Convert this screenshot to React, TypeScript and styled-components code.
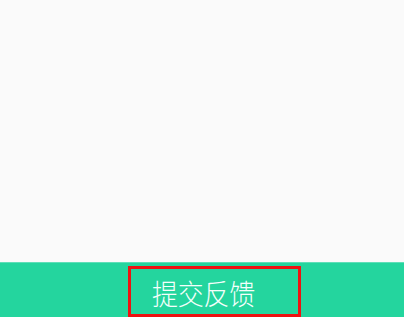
import React from "react";
import styled, { createGlobalStyle } from "styled-components";

const Global = createGlobalStyle`
  html, body { margin: 0; padding: 0; background: #fafafa; }
  body { font-family: "Noto Sans CJK SC", "Noto Sans", sans-serif; }
`;

const Page = styled.div`
  display: flex;
  flex-direction: column;
  width: 404px;
  height: 317px;
  overflow: hidden;
`;

const Content = styled.main`
  flex: 1;
  background: #fafafa;
`;

const BottomBar = styled.footer`
  position: relative;
  height: 55px;
  flex-shrink: 0;
  background: #24d59e;
  border-top: 1px solid #5fdfb8;
  display: flex;
  align-items: center;
  justify-content: center;
  padding-top: 5px;
  padding-left: 3px;
  box-sizing: border-box;
`;

const SubmitLabel = styled.span`
  display: inline-block;
  color: #f4fffb;
  font-size: 26px;
  font-weight: 300;
  line-height: 1;
  letter-spacing: -0.3px;
  transform: scaleY(1.1);
`;

const Highlight = styled.div`
  position: absolute;
  left: 128px;
  top: 3px;
  width: 173px;
  height: 51px;
  box-sizing: border-box;
  border: 3px solid #ee1111;
  pointer-events: none;
`;

export default function App() {
  return (
    <>
      <Global />
      <Page>
        <Content />
        <BottomBar>
          <SubmitLabel>提交反馈</SubmitLabel>
          <Highlight />
        </BottomBar>
      </Page>
    </>
  );
}
